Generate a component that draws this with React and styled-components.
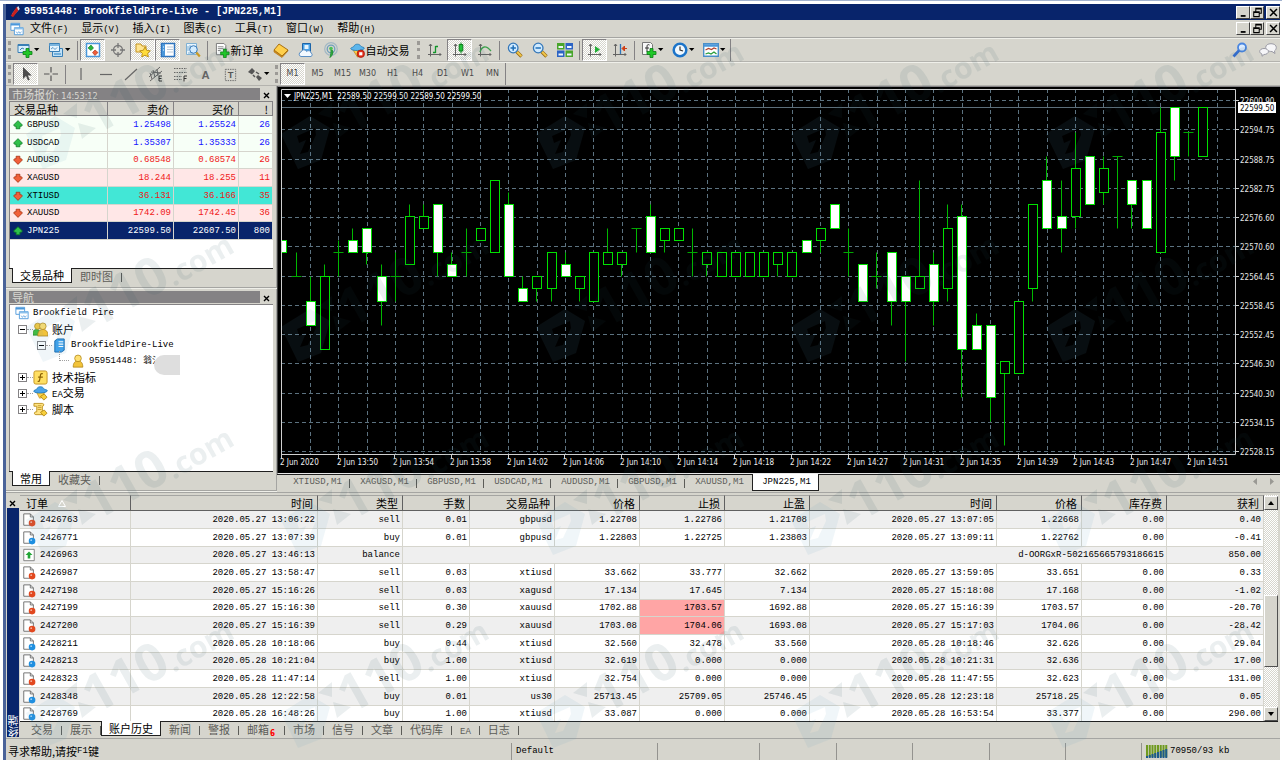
import React from 'react';

import styled, { createGlobalStyle, css } from 'styled-components';

const face = '#d6d5cd';
const shade = '#848284';
const navy = '#08246b';
const mono = '"Liberation Mono", "Noto Sans CJK SC", monospace';
const cjk = '"Noto Sans CJK SC", "Liberation Sans", sans-serif';
const tahoma = '"DejaVu Sans Condensed", "DejaVu Sans", sans-serif';

const GlobalStyle = createGlobalStyle`
  * { box-sizing: border-box; }
  body {
    background: #ffffff;
    color: #000000;
    font-family: ${cjk};
    font-size: 11px;
    line-height: 14px;
    margin: 0;
    overflow: hidden;
  }
  button {
    background: none;
    border: 0;
    color: inherit;
    font: inherit;
    margin: 0;
    padding: 0;
    white-space: nowrap;
  }
`;

const dither = css`
  background: repeating-conic-gradient(#ffffff 0% 25%, ${face} 0% 50%) 0 0 / 2px 2px;
`;

const Frame = styled.div`
  background: linear-gradient(#a3b3cf 0 1px, #ffffff 1px);
  height: 100vh;
  min-height: 640px;
  padding: 4px 2px 3px 3px;
`;

const Window = styled.main`
  background: ${face};
  border-left: 3px solid #4a6399;
  display: flex;
  flex-direction: column;
  height: 100%;
`;

const TitleBar = styled.header`
  align-items: center;
  background: ${navy};
  color: #ffffff;
  display: flex;
  flex: none;
  font: bold 10px/16px ${mono};
  gap: 2px;
  height: 16px;
  padding-left: 4px;
`;

const TitleText = styled.span`
  flex: 1;
  white-space: pre;
`;

const WinButtons = styled.div`
  display: flex;
  margin-left: auto;
`;

const WinButton = styled.button`
  background: ${face};
  border: 1px solid;
  border-color: #ffffff #404040 #404040 #ffffff;
  color: #000000;
  display: flex;
  height: 13px;
  justify-content: center;
  width: 14px;

  &:last-child {
    margin-left: 2px;
  }
`;

const MenuBar = styled.nav`
  align-items: center;
  border-bottom: 1px solid #a5a5a2;
  display: flex;
  flex: none;
  height: 18px;
  padding-left: 4px;
`;

const MenuItem = styled.button`
  padding: 0 7px 0 6px;
`;

const Small = styled.span`
  font-family: ${mono};
  font-size: 9px;
`;

const ToolRow = styled.div`
  border-bottom: 1px solid #b4b3ae;
  border-top: 1px solid #efefe9;
  display: flex;
  flex: none;
  height: 24px;
  padding-left: 1px;
`;

const ToolGroup = styled.div`
  align-items: center;
  border-right: 1px solid ${shade};
  display: flex;
`;

const Grip = styled.span`
  border-left: 3px dotted #9c9a96;
  height: 18px;
  margin: 0 2px 0 1px;
  width: 3px;
`;

const Sep = styled.span`
  border-right: 1px solid ${shade};
  height: 19px;
  margin-right: 2px;
  width: 3px;
`;

const ToolButton = styled.button`
  align-items: center;
  color: ${(p) => (p.$muted ? '#4a4a4a' : '#000000')};
  display: flex;
  flex: none;
  font-family: ${(p) => (p.$muted ? '"DejaVu Sans", sans-serif' : cjk)};
  font-size: ${(p) => (p.$muted ? '8px' : '11px')};
  gap: 1px;
  height: 22px;
  justify-content: center;
  width: ${(p) => p.$width || 25}px;
  ${(p) => p.$pressed && css`
    ${dither}
    border: 1px solid;
    border-color: ${shade} #ffffff #ffffff ${shade};
  `}
`;

const Spacer = styled.div`
  flex: 1;
`;

const Middle = styled.div`
  display: grid;
  flex: 1;
  grid-template-columns: 271px minmax(0, 1fr);
  min-height: 0;
`;

const Dock = styled.div`
  display: grid;
  grid-template-rows: 203px minmax(0, 1fr);
  min-height: 0;
`;

const Panel = styled.section`
  border-bottom: 1px solid #efefe9;
  box-shadow: inset -1px -1px 0 #a5a5a2;
  display: flex;
  flex-direction: column;
  min-height: 0;
  padding: 2px 4px 3px 3px;
`;

const PanelTitle = styled.h2`
  display: flex;
  flex: none;
  font-size: 11px;
  font-weight: normal;
  height: 12px;
  line-height: 12px;
  margin: 0 0 1px;

  > span {
    background: ${shade};
    color: #d9d8d2;
    flex: 1;
    padding-left: 3px;
  }

  > button {
    width: 13px;
  }
`;

const Clock = styled.span`
  font-family: ${tahoma};
  font-size: 9px;
`;

const PanelBody = styled.div`
  background: #ffffff;
  border-left: 1px solid ${shade};
  border-top: 1px solid ${shade};
  flex: 1;
  min-height: 0;
`;

const TabStrip = styled.div`
  border-top: 1px solid #202020;
  color: #5c5c58;
  display: flex;
  flex: none;
  height: ${(p) => p.$height || 17}px;
  padding-left: 3px;
`;

const Tab = styled.button`
  font-family: ${cjk};
  height: 14px;
  line-height: 14px;
  padding: 0 9px 0 8px;
  position: relative;

  &::after {
    border-right: 1px solid #5c5c58;
    content: '';
    height: 9px;
    position: absolute;
    right: 0;
    top: 4px;
  }

  ${(p) => p.$active && css`
    background: #ffffff;
    border: 1px solid #202020;
    border-top: 0;
    color: #000000;
    height: 15px;
    margin-top: -1px;
    padding: 0 7px;

    &::after { display: none; }
  `}
`;

const Quotes = styled.table`
  border-collapse: separate;
  border-spacing: 0;
  table-layout: fixed;
  width: 100%;

  th {
    background: ${face};
    border-bottom: 1px solid ${shade};
    border-right: 1px solid ${shade};
    font-weight: normal;
    height: 14px;
    line-height: 12px;
    padding: 0 4px;
    text-align: right;
  }

  th:first-child {
    text-align: left;
  }
`;

const rowTone = {
  plain: '#f7fff7',
  pink: '#ffe7e7',
  teal: '#42e7d6',
  selected: navy,
};

const QuoteRow = styled.tr`
  background: ${(p) => rowTone[p.$tone]};
  color: ${(p) => (p.$tone === 'selected' ? '#ffffff' : p.$up ? '#1414ff' : '#f01818')};
  height: 18px;

  &:nth-child(3n) { height: 17px; }

  td {
    border-bottom: 1px solid ${face};
    border-right: 1px solid ${face};
    font: 9px/14px ${mono};
    padding: 0 2px;
    text-align: right;
  }

  td:first-child {
    color: ${(p) => (p.$tone === 'selected' ? '#ffffff' : '#000000')};
    padding-left: 3px;
    text-align: left;
  }
`;

const IconLabel = styled.span`
  align-items: center;
  display: flex;
  gap: ${(p) => p.$gap || 4}px;
`;

const Tree = styled.ul`
  list-style: none;
  margin: 0;
  padding: 0;
`;

const TreeItem = styled.li`
  align-items: center;
  display: flex;
  font-family: ${(p) => (p.$latin ? mono : cjk)};
  font-size: ${(p) => (p.$latin ? 9 : 11)}px;
  gap: 4px;
  height: 16px;
  padding-left: ${(p) => p.$indent}px;
`;

const Expander = styled.button`
  border: 1px solid ${shade};
  display: flex;
  height: 9px;
  position: relative;
  width: 9px;

  &::before {
    background: #000000;
    content: '';
    height: 1px;
    left: 1px;
    position: absolute;
    top: 3px;
    width: 5px;
  }

  &::after {
    background: #000000;
    content: '';
    display: ${(p) => (p.$open ? 'none' : 'block')};
    height: 5px;
    left: 3px;
    position: absolute;
    top: 1px;
    width: 1px;
  }
`;

const Dots = styled.span`
  border-bottom: 1px dotted #a0a0a0;
  height: 1px;
  margin: 0 -4px;
  width: 6px;
`;

const Branch = styled.span`
  border-bottom: 1px dotted #a0a0a0;
  border-left: 1px dotted #a0a0a0;
  height: 10px;
  margin-right: -2px;
  margin-top: -10px;
  width: 10px;
`;

const Account = styled.span`
  position: relative;
`;

const Smudge = styled.span`
  background: #dedede;
  border-radius: 12px 0 0 12px;
  height: 20px;
  left: 65px;
  position: absolute;
  top: 1px;
  width: 26px;
`;

const ChartSide = styled.div`
  display: flex;
  flex-direction: column;
  min-height: 0;
  min-width: 0;
`;

const ChartBox = styled.div`
  background: #000000;
  border-bottom: 1px solid #e8e8e8;
  border-left: 1px solid #404040;
  border-top: 1px solid ${shade};
  flex: 1;
  min-height: 0;
`;

const ChartSvg = styled.svg`
  display: block;
  font: 8px ${tahoma};
  height: 100%;
  width: 100%;
`;

const ChartTabs = styled(TabStrip)`
  align-items: flex-start;
  padding-left: 6px;

  svg { margin: 3px 3px 0 0; }
`;

const ChartTab = styled(Tab)`
  font: 9px/15px ${mono};
  height: ${(p) => (p.$active ? 17 : 15)}px;
  padding: 0 0 0 2px;
  width: 67px;

  &:nth-last-of-type(2)::after { display: none; }
`;

const Terminal = styled.section`
  border-top: 1px solid #a5a5a2;
  display: flex;
  flex: none;
  height: 246px;
  padding: 2px 2px 1px 1px;
`;

const TerminalSide = styled.div`
  display: flex;
  flex-direction: column;
  width: 13px;

  > button {
    height: 13px;
    width: 11px;
  }
`;

const TerminalName = styled.div`
  background: ${navy};
  color: #ffffff;
  flex: 1;
  line-height: 12px;
  margin-right: 1px;
  transform: rotate(180deg);
  width: 12px;
  writing-mode: vertical-rl;
`;

const TerminalMain = styled.div`
  display: flex;
  flex: 1;
  flex-direction: column;
  min-width: 0;
`;

const HistoryArea = styled.div`
  display: flex;
  flex: 1;
  min-height: 0;
  overflow: hidden;
`;

const HistoryWrap = styled.div`
  flex: 1;
  overflow: hidden;
`;

const History = styled.table`
  border-collapse: separate;
  border-spacing: 0;
  table-layout: fixed;
  width: 100%;

  th {
    background: ${face};
    border-bottom: 1px solid #606060;
    border-right: 1px solid #606060;
    border-top: 1px solid #a5a5a2;
    font-weight: normal;
    height: 16px;
    line-height: 13px;
    padding: 0 4px;
    text-align: right;
  }

  th:first-child {
    padding-left: 6px;
    text-align: left;
  }
`;

const Deal = styled.tr`
  background: #ffffff;
  height: 18px;

  &:nth-child(odd) { background: #efefef; }
  &:nth-child(3n) { height: 17px; }

  td {
    border-bottom: 1px solid ${face};
    border-right: 1px solid ${face};
    font: 9px/14px ${mono};
    padding: 0 2px;
    text-align: right;
    white-space: nowrap;
  }
`;

const Cell = styled.td`
  background: ${(p) => (p.$hit ? '#ffa5a5' : 'transparent')};
`;

const Scroll = styled.div`
  ${dither}
  display: flex;
  flex: none;
  flex-direction: column;
  padding-top: 1px;
  width: 14px;
`;

const ScrollPart = styled.button`
  align-items: center;
  background: ${face};
  border: 1px solid;
  border-color: #ffffff #505050 #505050 #ffffff;
  display: flex;
  height: ${(p) => p.$height || 14}px;
  justify-content: center;
`;

const Gap = styled.span`
  flex: ${(p) => p.$grow};
`;

const Badge = styled.sub`
  bottom: -2px;
  color: #ff0000;
  font: bold 8px/8px ${tahoma};
  position: absolute;
  right: 10px;
`;

const MailTab = styled(Tab)`
  padding-right: 16px;
`;

const StatusBar = styled.footer`
  align-items: center;
  border-top: 1px solid #a5a5a2;
  display: grid;
  flex: none;
  grid-template-columns: minmax(0, 1fr) 146px 102px 77px 76px 77px 76px 76px 139px;
  height: 22px;
  padding-top: 3px;

  > span {
    align-items: center;
    border-left: 1px solid #94938f;
    display: flex;
    gap: 2px;
    height: 17px;
    padding-left: 4px;
  }

  > span:first-child {
    border: 0;
    gap: 0;
    padding-left: 2px;
  }
`;

const Watermark = styled.svg`
  height: 100%;
  left: 0;
  pointer-events: none;
  position: fixed;
  top: 0;
  width: 100%;
`;

const Svg = ({ size = 16, children, ...rest }) => (
  <svg width={size} height={size} viewBox="0 0 16 16" fill="none" aria-hidden="true" {...rest}>{children}</svg>
);

const Caret = () => (
  <svg width="6" height="4" viewBox="0 0 6 4" aria-hidden="true"><path d="M0 0h5.4L2.7 3z" fill="#000" /></svg>
);

const CloseGlyph = () => (
  <svg width="7" height="7" viewBox="0 0 7 7" aria-hidden="true"><path d="M1 1l5 5M6 1L1 6" stroke="#000" strokeWidth="1.4" /></svg>
);

const Plus = () => (
  <path d="M9 6.5h3v3h3v3h-3v3H9v-3H6v-3h3z" fill="#20c828" stroke="#0a7d14" strokeWidth=".8" />
);

const Axes = () => (
  <path d="M3.5 2v12.500M1 12.500h13M2 4l1.500-2L5 4M12.500 11l1.500 1.500-1.500 1.500" stroke="#636363" strokeWidth="1" />
);

const Mag = ({ children }) => (
  <>
    <path d="M9.500 9.500l5 5" stroke="#9a6b12" strokeWidth="3.400" />
    <path d="M10 9.800l4.300 4.300" stroke="#f0c64a" strokeWidth="2" />
    <circle cx="6.200" cy="6" r="4.800" fill="#cfeaff" stroke="#3577b8" strokeWidth="1.300" />
    {children}
  </>
);

const Diamond = ({ children }) => (
  <>
    {children}
    <path d="M8 11l4-2.500 3 3.500-3.500 3z" fill="#f7cf3c" stroke="#a97c08" strokeWidth=".8" />
  </>
);

const icons = {
  newChart: (
    <>
      <path d="M1 2.500h11v8H1z" fill="#d9eefb" stroke="#3a7fb5" />
      <path d="M1 3h11" stroke="#3a7fb5" strokeWidth="2" />
      <path d="M3 8l2-2 2 1" stroke="#3a7fb5" />
      <Plus />
    </>
  ),
  profiles: (
    <>
      <path d="M4.500 6.500h10v8h-10z" fill="#bfe0f6" stroke="#3a7fb5" />
      <path d="M1.500 1.500h10v8h-10z" fill="#e6f4fd" stroke="#3a7fb5" />
      <path d="M1 3h11M6 12h7" stroke="#5aa0d3" strokeWidth="1.500" />
      <path d="M3 7l2-1.500 2 2 2-2" stroke="#3a7fb5" strokeWidth=".8" />
    </>
  ),
  watch: (
    <>
      <path d="M1.500 1.500h13v13h-13z" fill="#fff" stroke="#4a97da" strokeWidth="1.500" />
      <path d="M3 6L6 3l2.500 3L6 8.500z" fill="#29b53a" stroke="#08731a" strokeWidth=".6" />
      <path d="M7.500 10.500L10 8l3 2.500-3 3z" fill="#ee5b38" stroke="#a32b11" strokeWidth=".6" />
    </>
  ),
  cross: (
    <>
      <circle cx="8" cy="8" r="4.500" stroke="#777" strokeWidth="1.300" />
      <path d="M8 1v5M8 10v5M1 8h5M10 8h5" stroke="#777" strokeWidth="1.300" />
    </>
  ),
  navigator: (
    <>
      <path d="M1 2h5l1 2h4v6H1z" fill="#ffe591" stroke="#c39322" />
      <path d="M10 5l1.700 3.300 3.600.5-2.600 2.500.6 3.600L10 13.200l-3.300 1.700.6-3.600L4.700 8.800l3.600-.5z" fill="#ffdc3b" stroke="#b78a13" strokeWidth=".9" />
    </>
  ),
  terminal: (
    <>
      <path d="M1.500 1.500h13v13h-13z" fill="#fff" stroke="#2f74be" strokeWidth="1.500" />
      <path d="M3.500 2v12" stroke="#4a97da" strokeWidth="3" />
      <path d="M7 5h6M7 7.500h6M7 10h6" stroke="#b9c8d8" />
      <path d="M3 5h1M3 8h1" stroke="#fff" />
    </>
  ),
  tester: (
    <>
      <path d="M1.500 1.500h10v11h-10z" fill="#e9f5fd" stroke="#7fb0d3" />
      <path d="M3 4v5M5 3v4M3 11h6" stroke="#7fb0d3" />
      <circle cx="8.500" cy="7.500" r="3.800" fill="#cfeaff" fillOpacity=".85" stroke="#3577b8" />
      <path d="M11.300 10.500l3.500 4" stroke="#c99a24" strokeWidth="2.200" />
    </>
  ),
  order: (
    <>
      <path d="M1.500.5h8l2 2v10h-10z" fill="#fff" stroke="#777" />
      <path d="M3 4h6M3 6h6M3 8h3" stroke="#888" />
      <Plus />
    </>
  ),
  book: (
    <>
      <path d="M1 8v2l8 5.500 6-6.500V8l-6 6z" fill="#d98f1c" stroke="#a87011" strokeWidth=".6" />
      <path d="M1 8l5-6 9 6-6 6z" fill="#ffcf4a" stroke="#a87011" />
    </>
  ),
  mql: (
    <>
      <path d="M4.500 1.500h8v9h-8z" fill="#4ba3e8" stroke="#1c64a8" />
      <path d="M6.500 3h4v4h-4z" fill="#e6f4fd" />
      <path d="M3 14.500a2.300 2.300 0 010-4.500 3 3 0 015.600-.5A2.500 2.500 0 0113 11a1.900 1.900 0 010 3.500z" fill="#f3f9ff" stroke="#5b8fc4" />
    </>
  ),
  signal: (
    <>
      <circle cx="8" cy="7" r="6.300" stroke="#a3b8c4" strokeWidth="1.200" />
      <circle cx="8" cy="7" r="3.800" stroke="#6f9fbd" strokeWidth="1.300" />
      <path d="M8 7c3 2 2 6-1 8.500 1-3 1-5 1-8.500z" fill="#35b546" stroke="#1d8b2e" />
      <circle cx="8" cy="6.500" r="1.800" fill="#4bbf57" />
    </>
  ),
  auto: (
    <>
      <path d="M3 7l5 8 5-3V6z" fill="#ffd248" stroke="#b78316" strokeWidth=".8" />
      <path d="M.7 6C1 4.500 4 4.800 4.500 3c.6-2.300 6-2.300 6.700 0 .4 1.500 3.800 1 4.100 2.500C15 8.500 1.500 9 .7 6z" fill="#5cb6ec" stroke="#1e74ae" strokeWidth=".8" />
      <circle cx="11.500" cy="11.500" r="4" fill="#e12b18" stroke="#9e1408" strokeWidth=".7" />
      <path d="M9.800 9.800h3.400v3.400H9.800z" fill="#fff" />
    </>
  ),
  bars: (<><Axes /><path d="M8.500 4v7M8.500 4.500h2.500M6 10.500h2.500" stroke="#12962a" strokeWidth="1.300" /></>),
  candles: (<><Axes /><path d="M9 .5v11" stroke="#12962a" /><path d="M7.200 2.500h3.600v6.500H7.200z" fill="#1fc237" stroke="#0b7d1c" /></>),
  line: (<><Axes /><path d="M3 10c2-6 6-7 11-1" stroke="#3da24d" strokeWidth="1.300" /></>),
  zoomIn: (<Mag><path d="M3.500 6h5.400M6.200 3.300v5.400" stroke="#1f6fb8" strokeWidth="1.500" /></Mag>),
  zoomOut: (<Mag><path d="M3.500 6h5.400" stroke="#1f6fb8" strokeWidth="1.500" /></Mag>),
  tile: (
    <>
      <path d="M0 1h7.500v6.500H0zM8.500 8.500H16V15H8.500z" fill="#49a52b" />
      <path d="M8.500 1H16v6.500H8.500zM0 8.500h7.500V15H0z" fill="#2b63c4" />
      <path d="M1.500 4H6v2H1.500zM10 4h4.500v2H10zM1.500 11.500H6v2H1.500zM10 11.500h4.500v2H10z" fill="#eef6fd" />
    </>
  ),
  scroll: (<><Axes /><path d="M8 4l5 3.500L8 11z" fill="#22ad36" /></>),
  shift: (<><Axes /><path d="M8.500 2v10" stroke="#2d74b8" strokeWidth="1.300" /><path d="M15 6.500h-4M12.500 4L10 6.500 12.500 9z" stroke="#cf3e15" fill="#cf3e15" /></>),
  indicators: (
    <>
      <path d="M1.500.5h8l2 2v10h-10z" fill="#f8f8f8" stroke="#777" />
      <path d="M8.500 3c-2-1-2.500 0-2.500 2v5M4 6h4" stroke="#333" />
      <Plus />
    </>
  ),
  clock: (
    <>
      <circle cx="8" cy="8" r="6.300" fill="#f2f9ff" stroke="#1c74c9" strokeWidth="2.500" />
      <path d="M8 4.500V8l3 1" stroke="#333" strokeWidth="1.200" />
    </>
  ),
  template: (
    <>
      <path d="M.7 1.700h14.600v12.600H.7z" fill="#fff" stroke="#4a8fc9" strokeWidth="1.400" />
      <path d="M1 3.500h14" stroke="#4a97da" strokeWidth="2.500" />
      <path d="M2.500 8l3-1.500 3 1 2.500-1.500 2.500 1" stroke="#b0412b" strokeWidth="1.300" />
      <path d="M2.500 12l3-1 2.500 1 3-2 2.500 2" stroke="#2a9e3b" strokeWidth="1.300" />
    </>
  ),
  pointer: <path d="M5 1v12l3-3 2 4.500 1.800-.8L9.800 9.500h4z" fill="#4d4d4d" />,
  plusCross: <path d="M8 1v5.500M8 9.500V15M1 8h5.500M9.500 8H15" stroke="#555" strokeWidth="1.200" />,
  vline: <path d="M8 2v12" stroke="#666" strokeWidth="1.200" />,
  hline: <path d="M2 8.500h12" stroke="#666" strokeWidth="1.200" />,
  trend: <path d="M2 14L14 3" stroke="#666" strokeWidth="1.200" />,
  channel: (
    <>
      <path d="M1 11L12 1M2 15L14 5M2 7l2 6M5 4l2 7M9 3l1 7M3 6l10 1" stroke="#666" />
      <path d="M14 10h-3v5h3M11 12.500h2.500" stroke="#333" />
    </>
  ),
  fibo: (
    <>
      <path d="M1 2.500h13M1 6.500h13M1 10.500h8M1 13.500h8" stroke="#666" strokeDasharray="1.500 1" />
      <path d="M14 10h-3v5.500M11 12.500h2.500" stroke="#333" />
    </>
  ),
  label: <path d="M2.500 2.500h11v12h-11z" stroke="#666" strokeDasharray="1.500 1" />,
  arrows: (
    <>
      <path d="M1 6l4-4 3 3-3 3.500zM9 11l2-2 4 3-3 3z" fill="#555" />
      <path d="M6 9l2 2M9 6l3 2" stroke="#555" strokeWidth="1.500" />
    </>
  ),
  find: (<><circle cx="10" cy="5.500" r="4" fill="#dcecff" stroke="#4a86e0" strokeWidth="1.800" /><path d="M7 8.500l-5.500 6" stroke="#3670d4" strokeWidth="2.600" /></>),
  app: (
    <>
      <path d="M1 1.500h10v8H1z" fill="#fff" stroke="#4a97da" />
      <path d="M1 3h10" stroke="#4a97da" strokeWidth="2" />
      <path d="M5 6.500h10v8H5z" fill="#fff" stroke="#4a97da" />
      <path d="M5 7.500h10" stroke="#8cc0ea" strokeWidth="2" />
      <path d="M7 11l1.500 2 1.500-2 1.500 2 1.500-2" stroke="#4a97da" strokeWidth=".8" />
    </>
  ),
  users: (
    <>
      <path d="M0 14c0-5 1-6 4-6s4 2 4 6z" fill="#3fbf3a" stroke="#1b8218" strokeWidth=".7" />
      <circle cx="5" cy="4.500" r="3.300" fill="#f6cb3f" stroke="#a77c0e" strokeWidth=".7" />
      <path d="M5 15c0-5 2-7 5.500-7S16 10 16 15z" fill="#f2c33a" stroke="#a77c0e" strokeWidth=".7" />
      <circle cx="10.500" cy="4.500" r="3.500" fill="#ffe071" stroke="#a77c0e" strokeWidth=".7" />
    </>
  ),
  user: (
    <>
      <path d="M2.500 15c0-5 2-7 5.500-7s5.500 2 5.500 7z" fill="#f2c33a" stroke="#a77c0e" strokeWidth=".8" />
      <circle cx="8" cy="5" r="3.800" fill="#ffe071" stroke="#a77c0e" strokeWidth=".8" />
    </>
  ),
  server: (
    <>
      <path d="M3 3l3-2h7v12l-3 2H3z" fill="#3fa3ee" stroke="#1466ad" />
      <path d="M7 4h5M7 6.500h5M7 9h5" stroke="#fff" strokeWidth="1.200" />
    </>
  ),
  func: (
    <>
      <rect x="1" y="1" width="14" height="14" rx="2" fill="#ffdf62" stroke="#c39322" />
      <path d="M10.500 4C7.500 3 8 6 7.500 8.500S7 13 5 12M5.500 7.500h5" stroke="#8c6205" strokeWidth="1.300" />
    </>
  ),
  expert: (
    <Diamond>
      <path d="M4 7l3 6 4-1 1-5z" fill="#ffd248" stroke="#b78316" strokeWidth=".7" />
      <path d="M.7 5.500C1 4 4 4.300 4.500 2.500c.6-2.300 6-2.300 6.700 0 .4 1.500 3.800 1 4.100 2.500C15 8 1.500 8.500.7 5.500z" fill="#4ba3e8" stroke="#1e74ae" strokeWidth=".8" />
    </Diamond>
  ),
  script: (
    <Diamond>
      <path d="M1 1.500h9c2 0 2 3 0 3v7c0 2 1 2 1 2H3c-2 0-2-3 0-3h1v-6H1z" fill="#ffe382" stroke="#b78a13" strokeWidth=".9" />
      <path d="M5 4h4M5 6h4M5 8h4" stroke="#b78a13" strokeWidth=".8" />
    </Diamond>
  ),
};

const Icon = ({ name, size }) => <Svg size={size}>{icons[name]}</Svg>;

const Arrow = ({ up }) => (
  <Svg size={10}>
    <g transform={up ? undefined : 'rotate(180 8 8)'}>
      <path d="M8 1l7 7-1.500 2H11v4H5v-4H2.500L1 8z" fill={up ? '#2fc14a' : '#f2603a'} stroke={up ? '#0d7a25' : '#a63413'} strokeWidth="1.300" />
    </g>
  </Svg>
);

const DocIcon = ({ type }) => (
  <Svg size={14}>
    {type === 'balance' ? (
      <>
        <path d="M2 1.500h12v13H2z" fill="#fff" stroke="#777" />
        <path d="M8 4l4 4h-2.500v4h-3V8H4z" fill="#22a637" />
      </>
    ) : (
      <>
        <path d="M2 1h7.500L13 4.500V14H2z" fill="#fff" stroke="#666" />
        <path d="M9.500 1v3.500H13" stroke="#666" />
        <circle cx="11.500" cy="11.500" r="3.800" fill={type === 'sell' ? '#e2481f' : '#1f8fe0'} />
        <circle cx="10.500" cy="10.500" r="1" fill="#ffffff" fillOpacity=".6" />
      </>
    )}
  </Svg>
);

const Controls = () => (
  <WinButtons>
    <WinButton aria-label="minimize"><Svg size={11}><path d="M4 13h7" stroke="#000" strokeWidth="2.600" /></Svg></WinButton>
    <WinButton aria-label="restore">
      <Svg size={11}><path d="M5.500 6V2h8v7h-3M5 3h9M2.500 7h8v7h-8zM2 8h9" stroke="#000" strokeWidth="1.500" /></Svg>
    </WinButton>
    <WinButton aria-label="close"><Svg size={11}><path d="M3 3l10 10M13 3L3 13" stroke="#000" strokeWidth="2.200" /></Svg></WinButton>
  </WinButtons>
);

const Tool = ({ icon, pressed, width, drop, muted, label, children }) => (
  <ToolButton $pressed={pressed} $width={drop ? 31 : width} $muted={muted} aria-label={label || icon}>
    {icon && <Icon name={icon} size={children ? 15 : 16} />}
    {children}
    {drop && <Caret />}
  </ToolButton>
);

const menus = [['文件', '(F)'], ['显示', '(V)'], ['插入', '(I)'], ['图表', '(C)'], ['工具', '(T)'], ['窗口', '(W)'], ['帮助', '(H)']];
const frames = ['M1', 'M5', 'M15', 'M30', 'H1', 'H4', 'D1', 'W1', 'MN'];

const quotes = [
  ['GBPUSD', '1.25498', '1.25524', '26', true, 'plain'],
  ['USDCAD', '1.35307', '1.35333', '26', true, 'plain'],
  ['AUDUSD', '0.68548', '0.68574', '26', false, 'plain'],
  ['XAGUSD', '18.244', '18.255', '11', false, 'pink'],
  ['XTIUSD', '36.131', '36.166', '35', false, 'teal'],
  ['XAUUSD', '1742.09', '1742.45', '36', false, 'pink'],
  ['JPN225', '22599.50', '22607.50', '800', true, 'selected'],
];

const chartTabs = ['XTIUSD,M1', 'XAGUSD,M1', 'GBPUSD,M1', 'USDCAD,M1', 'AUDUSD,M1', 'GBPUSD,M1', 'XAUUSD,M1', 'JPN225,M1'];

const columns = [['订单', 111], ['时间', 187], ['类型', 85], ['手数', 67], ['交易品种', 85], ['价格', 85], ['止损', 85], ['止盈', 85], ['时间', 187], ['价格', 85], ['库存费', 85], ['获利']];

const deals = [
  ['2426763', '2020.05.27 13:06:22', 'sell', '0.01', 'gbpusd', '1.22708', '1.22786', '1.21708', '2020.05.27 13:07:05', '1.22668', '0.00', '0.40'],
  ['2426771', '2020.05.27 13:07:39', 'buy', '0.01', 'gbpusd', '1.22803', '1.22725', '1.23803', '2020.05.27 13:09:11', '1.22762', '0.00', '-0.41'],
  ['2426963', '2020.05.27 13:46:13', 'balance', 'd-OORGxR-502165665793186615', '850.00'],
  ['2426987', '2020.05.27 13:58:47', 'sell', '0.03', 'xtiusd', '33.662', '33.777', '32.662', '2020.05.27 13:59:05', '33.651', '0.00', '0.33'],
  ['2427198', '2020.05.27 15:16:26', 'sell', '0.03', 'xagusd', '17.134', '17.645', '7.134', '2020.05.27 15:18:08', '17.168', '0.00', '-1.02'],
  ['2427199', '2020.05.27 15:16:30', 'sell', '0.30', 'xauusd', '1702.88', '1703.57', '1692.88', '2020.05.27 15:16:39', '1703.57', '0.00', '-20.70'],
  ['2427200', '2020.05.27 15:16:39', 'sell', '0.29', 'xauusd', '1703.08', '1704.06', '1693.08', '2020.05.27 15:17:03', '1704.06', '0.00', '-28.42'],
  ['2428211', '2020.05.28 10:18:06', 'buy', '0.44', 'xtiusd', '32.560', '32.478', '33.560', '2020.05.28 10:18:46', '32.626', '0.00', '29.04'],
  ['2428213', '2020.05.28 10:21:04', 'buy', '1.00', 'xtiusd', '32.619', '0.000', '0.000', '2020.05.28 10:21:31', '32.636', '0.00', '17.00'],
  ['2428323', '2020.05.28 11:47:14', 'sell', '1.00', 'xtiusd', '32.754', '0.000', '0.000', '2020.05.28 11:47:55', '32.623', '0.00', '131.00'],
  ['2428348', '2020.05.28 12:22:58', 'buy', '0.01', 'us30', '25713.45', '25709.05', '25746.45', '2020.05.28 12:23:18', '25718.25', '0.00', '0.05'],
  ['2428769', '2020.05.28 16:48:26', 'buy', '1.00', 'xtiusd', '33.087', '0.000', '0.000', '2020.05.28 16:53:54', '33.377', '0.00', '290.00'],
];

const prices = ['22600.90', '22594.75', '22588.75', '22582.75', '22576.60', '22570.60', '22564.45', '22558.45', '22552.45', '22546.30', '22540.30', '22534.15', '22528.15'];
const times = ['2020', '13:50', '13:54', '13:58', '14:02', '14:06', '14:10', '14:14', '14:18', '14:22', '14:27', '14:31', '14:35', '14:39', '14:43', '14:47', '14:51'];

// high, body top, body bottom, low (in steps below the bid line), bearish
const bars = [
  [10, 11, 12, 12, 1], [12, 14, 14, 14], [14, 16, 18, 18, 1], [13, 14, 20, 20], [11, 12, 12, 14], [10, 11, 12, 12, 1],
  [10, 10, 12, 13, 1], [13, 14, 16, 18, 1], [12, 14, 14, 16], [8, 9, 13, 13], [8, 9, 10, 10], [8, 8, 12, 14, 1],
  [12, 13, 14, 14, 1], [10, 12, 12, 14], [10, 10, 11, 11], [6, 6, 12, 12], [7, 8, 14, 14, 1], [14, 15, 16, 16, 1],
  [14, 14, 15, 16], [12, 12, 15, 16], [12, 13, 14, 14, 1], [14, 14, 15, 16], [12, 12, 16, 16], [10, 12, 13, 13],
  [12, 12, 13, 14], [10, 10, 10, 12], [8, 9, 12, 12, 1], [10, 10, 11, 12], [10, 10, 11, 11], [10, 12, 12, 14],
  [12, 12, 13, 14], [12, 12, 14, 14], [12, 12, 14, 14], [12, 12, 14, 14], [12, 12, 14, 14], [12, 12, 13, 14],
  [12, 12, 14, 14], [11, 11, 12, 12, 1], [10, 10, 11, 12], [8, 8, 10, 10, 1], [10, 12, 12, 14], [13, 13, 16, 16, 1],
  [12, 14, 14, 15], [12, 12, 16, 18, 1], [14, 14, 16, 21, 1], [6, 14, 15, 15], [12, 13, 16, 18, 1], [8, 10, 15, 16],
  [8, 9, 20, 24, 1], [17, 18, 20, 20, 1], [18, 18, 24, 26, 1], [21, 21, 22, 28], [16, 16, 22, 22], [8, 8, 15, 16],
  [4, 6, 10, 10, 1], [6, 9, 10, 12, 1], [2, 5, 9, 10], [4, 4, 8, 8, 1], [4, 5, 7, 8], [4, 4, 4, 10],
  [6, 6, 8, 10, 1], [6, 6, 10, 10, 1], [0, 2, 12, 12], [0, 0, 4, 6, 1], [2, 2, 2, 4], [0, 0, 4, 4],
];

const level = (n) => Math.round(18.4 + n * 12.07) + 0.5;

const Chart = () => (
  <ChartSvg>
    <defs>
      <clipPath id="plot"><rect x="0" y="0" width="955" height="366" /></clipPath>
    </defs>
    <g transform="translate(3 2)">
      <g clipPath="url(#plot)" fill="none">
        {Array.from({ length: 33 }, (_, i) => {
          const x = Math.round(28.9 + (i * 85) / 3) + 0.5;
          return <path key={x} d={`M${x} 0V365`} stroke="#5c7280" strokeDasharray="4 3" />;
        })}
        {prices.map((p, i) => (
          <path key={p} d={`M0 ${Math.round(11 + i * 29.26) + 0.5}H955`} stroke="#5c7280" strokeDasharray="4 3" />
        ))}
        <path d="M0 18.500H955" stroke="#5c6e7a" />
        {bars.map(([high, top, bottom, low, bear], i) => {
          const x = Math.round(0.4 + (i * 85) / 6) + 0.5;
          return (
            <g key={x} stroke="#00e000">
              <path d={`M${x} ${level(high)}V${level(top)}M${x} ${level(bottom)}V${level(low)}`} stroke="#00b800" />
              {top === bottom
                ? <path d={`M${x - 5} ${level(top)}H${x + 5}`} stroke="#00a800" />
                : <rect x={x - 4} y={level(top)} width="9" height={level(bottom) - level(top)} fill={bear ? '#ffffff' : '#000000'} />}
            </g>
          );
        })}
      </g>
      <path d="M.5 365V.5H954.500V365.500H0" fill="none" stroke="#d0d0d0" />
      <path d="M3 5h7l-3.500 4z" fill="#fff" />
      <text x="13" y="10" fill="#fff" xmlSpace="preserve">JPN225,M1  22589.50 22599.50 22589.50 22599.50</text>
      {prices.map((p, i) => {
        const y = Math.round(11 + i * 29.26);
        return (
          <g key={p}>
            <path d={`M955 ${y + 0.5}h3`} stroke="#d0d0d0" />
            <text x="959" y={y + 4} fill="#e8e8e8">{p}</text>
          </g>
        );
      })}
      <rect x="957" y="13" width="38" height="11" fill="#fff" />
      <text x="959" y="22" fill="#000">22599.50</text>
      {times.map((t, i) => {
        const x = Math.round((i * 170) / 3);
        return (
          <g key={t}>
            <path d={`M${x + 0.5} 366v3`} stroke="#d0d0d0" />
            <text x={x - 1} y="376" fill="#f0f0f0">2 Jun {t}</text>
          </g>
        );
      })}
    </g>
  </ChartSvg>
);

const PanelHead = ({ children }) => (
  <PanelTitle><span>{children}</span><button aria-label="close"><CloseGlyph /></button></PanelTitle>
);

const MarketWatch = () => (
  <Panel>
    <PanelHead>市场报价<Clock>: 14:53:12</Clock></PanelHead>
    <PanelBody>
      <Quotes>
        <colgroup><col width="98" /><col width="66" /><col width="65" /><col /></colgroup>
        <thead><tr><th>交易品种</th><th>卖价</th><th>买价</th><th>!</th></tr></thead>
        <tbody>
          {quotes.map(([name, bid, ask, spread, up, tone]) => (
            <QuoteRow key={name} $up={up} $tone={tone}>
              <td><IconLabel><Arrow up={up} />{name}</IconLabel></td>
              <td>{bid}</td>
              <td>{ask}</td>
              <td>{spread}</td>
            </QuoteRow>
          ))}
        </tbody>
      </Quotes>
    </PanelBody>
    <TabStrip><Tab $active>交易品种</Tab><Tab>即时图</Tab></TabStrip>
  </Panel>
);

const Navigator = () => (
  <Panel>
    <PanelHead>导航</PanelHead>
    <PanelBody>
      <Tree>
        <TreeItem $latin $indent={5}><Icon name="app" size={14} />Brookfield Pire</TreeItem>
        <TreeItem $indent={8}><Expander $open aria-label="账户" /><Dots /><Icon name="users" size={15} />账户</TreeItem>
        <TreeItem $latin $indent={27}><Expander $open aria-label="BrookfieldPire-Live" /><Dots /><Icon name="server" size={15} />BrookfieldPire-Live</TreeItem>
        <TreeItem $latin $indent={49}>
          <Branch />
          <Icon name="user" size={14} />
          <Account>95951448: 翁氵<Smudge /></Account>
        </TreeItem>
        <TreeItem $indent={8}><Expander aria-label="技术指标" /><Dots /><Icon name="func" size={15} />技术指标</TreeItem>
        <TreeItem $indent={8}><Expander aria-label="EA" /><Dots /><Icon name="expert" size={15} /><span><Small>EA</Small>交易</span></TreeItem>
        <TreeItem $indent={8}><Expander aria-label="脚本" /><Dots /><Icon name="script" size={15} />脚本</TreeItem>
      </Tree>
    </PanelBody>
    <TabStrip><Tab $active>常用</Tab><Tab>收藏夹</Tab></TabStrip>
  </Panel>
);

const AccountHistory = () => (
  <HistoryArea>
    <HistoryWrap>
      <History>
        <colgroup>{columns.map(([name, width], i) => <col key={i} width={width} />)}</colgroup>
        <thead>
          <tr>
            {columns.map(([name], i) => (
              <th key={i}>
                {i === 0
                  ? <IconLabel $gap={10}>{name}<svg width="8" height="7" viewBox="0 0 8 7"><path d="M4 .5L.5 6.500h7z" fill="none" stroke="#ffffff" /></svg></IconLabel>
                  : name}
              </th>
            ))}
          </tr>
        </thead>
        <tbody>
          {deals.map(([id, ...cells]) => (
            <Deal key={id}>
              <td><IconLabel><DocIcon type={cells[1]} />{id}</IconLabel></td>
              {cells.map((c, i) => (
                <Cell key={i} colSpan={cells.length === 4 && i === 2 ? 8 : 1} $hit={i === 5 && (c === '1703.57' || c === '1704.06')}>{c}</Cell>
              ))}
            </Deal>
          ))}
        </tbody>
      </History>
    </HistoryWrap>
    <Scroll>
      <ScrollPart aria-label="up"><svg width="6" height="4"><path d="M3 0l3 4H0z" /></svg></ScrollPart>
      <Gap $grow={86} />
      <ScrollPart $height={72} aria-label="thumb" />
      <Gap $grow={40} />
      <ScrollPart aria-label="down"><svg width="6" height="4"><path d="M3 4l3-4H0z" /></svg></ScrollPart>
    </Scroll>
  </HistoryArea>
);

const Marks = () => (
  <Watermark aria-hidden="true">
    <defs>
      <pattern id="mark" width="255" height="193" patternUnits="userSpaceOnUse" x="10" y="0">
        <g fill="#264e58" fillOpacity=".09">
          {[0, 193].map((y) => (
            <g key={y} transform={`translate(36 ${y - 53})`}>
              <path d="M9-24L-20-6-3 29 20 20 29-12zM-4-4L14-12 15-5 7 12-1 14 5 0-2 3z" fill="#5a9ab8" fillRule="evenodd" />
              <path d="M17-26l14-11v15zM32-17l18 5-14 11z" />
              <g transform="translate(49 -4) rotate(-29.500)" fontFamily="Open Sans" fontWeight="bold">
                <text fontSize="52">110</text>
                <text x="89" y="2" fontSize="30">.com</text>
              </g>
            </g>
          ))}
        </g>
      </pattern>
    </defs>
    <rect x="6" y="22" width="100%" height="736" fill="url(#mark)" />
  </Watermark>
);

export default function App() {
  return (
    <Frame>
      <GlobalStyle />
      <Window>
        <TitleBar>
          <Svg size={12}><path d="M11 0L3 10l2 2 8-8z" fill="#d9e6f5" /><path d="M9 1L1 13l3 2 7-9z" fill="#c8201e" /></Svg>
          <TitleText>95951448: BrookfieldPire-Live - [JPN225,M1]</TitleText>
          <Controls />
        </TitleBar>
        <MenuBar>
          <Icon name="app" size={14} />
          {menus.map(([name, key]) => <MenuItem key={name}>{name}<Small>{key}</Small></MenuItem>)}
          <Controls />
        </MenuBar>
        <ToolRow>
          <ToolGroup>
            <Grip />
            <Tool icon="newChart" drop />
            <Tool icon="profiles" drop />
            <Sep />
            <Tool icon="watch" pressed />
            <Tool icon="cross" />
            <Tool icon="navigator" pressed />
            <Tool icon="terminal" pressed />
            <Tool icon="tester" />
            <Sep />
            <Tool icon="order" width={58} label="新订单">新订单</Tool>
            <Tool icon="book" />
            <Tool icon="mql" />
            <Tool icon="signal" />
            <Tool icon="auto" width={73} label="自动交易">自动交易</Tool>
            <Grip />
            <Tool icon="bars" />
            <Tool icon="candles" pressed />
            <Tool icon="line" />
            <Sep />
            <Tool icon="zoomIn" />
            <Tool icon="zoomOut" />
            <Tool icon="tile" />
            <Sep />
            <Tool icon="scroll" pressed />
            <Tool icon="shift" />
            <Sep />
            <Tool icon="indicators" drop />
            <Tool icon="clock" drop />
            <Tool icon="template" drop />
          </ToolGroup>
          <Spacer />
          <Tool icon="find" width={30} />
          <ToolButton aria-label="chat">
            <svg width="18" height="14" viewBox="0 0 18 14" fill="#f6f6f8" stroke="#9a9aa4">
              <path d="M12 .7c3 0 5.300 1.500 5.300 3.700S16 7.500 15.500 8l.5 2.500-3-2C9 8.500 6.700 7 6.700 4.500S9 .7 12 .7z" />
              <path d="M5 5.500c2.500 0 4.400 1.300 4.400 3s-2 3-4.400 3L3 13.300V11C1.500 10.500.7 9.500.7 8.500c0-1.700 1.800-3 4.300-3z" />
            </svg>
          </ToolButton>
        </ToolRow>
        <ToolRow>
          <ToolGroup>
            <Grip />
            <Tool icon="pointer" pressed />
            <Tool icon="plusCross" />
            <Sep />
            <Tool icon="vline" />
            <Tool icon="hline" />
            <Tool icon="trend" />
            <Tool icon="channel" />
            <Tool icon="fibo" />
            <ToolButton><Svg size={15}><text x="8" y="13" textAnchor="middle" fontFamily="Liberation Sans" fontWeight="bold" fontSize="12" fill="#666">A</text></Svg></ToolButton>
            <ToolButton><Svg size={15}>{icons.label}<text x="8" y="12" textAnchor="middle" fontFamily="Liberation Sans" fontWeight="bold" fontSize="10" fill="#555">T</text></Svg></ToolButton>
            <Tool icon="arrows" drop />
            <Grip />
            {frames.map((f) => <Tool key={f} muted pressed={f === 'M1'} label={f}>{f}</Tool>)}
          </ToolGroup>
        </ToolRow>
        <Middle>
          <Dock>
            <MarketWatch />
            <Navigator />
          </Dock>
          <ChartSide>
            <ChartBox><Chart /></ChartBox>
            <ChartTabs $height={18}>
              {chartTabs.map((name, i) => <ChartTab key={i} $active={i === 7}>{name}</ChartTab>)}
              <Spacer />
              <svg width="24" height="8" viewBox="0 0 24 8" fill="#9a9994"><path d="M4 0v7L0 3.500zM17 0v7l4-3.500z" /></svg>
            </ChartTabs>
          </ChartSide>
        </Middle>
        <Terminal>
          <TerminalSide>
            <button aria-label="close"><CloseGlyph /></button>
            <TerminalName>终端</TerminalName>
          </TerminalSide>
          <TerminalMain>
            <AccountHistory />
            <TabStrip $height={16}>
              <Tab>交易</Tab>
              <Tab>展示</Tab>
              <Tab $active>账户历史</Tab>
              <Tab>新闻</Tab>
              <Tab>警报</Tab>
              <MailTab>邮箱<Badge>6</Badge></MailTab>
              <Tab>市场</Tab>
              <Tab>信号</Tab>
              <Tab>文章</Tab>
              <Tab>代码库</Tab>
              <Tab><Small>EA</Small></Tab>
              <Tab>日志</Tab>
            </TabStrip>
          </TerminalMain>
        </Terminal>
        <StatusBar>
          <span>寻求帮助,请按<Small>F1</Small>键</span>
          <span><Small>Default</Small></span>
          <span /><span /><span /><span /><span /><span />
          <span>
            <svg width="22" height="13" viewBox="0 0 22 13">
              {[0, 1, 2, 3, 4, 5, 6, 7].map((i) => (
                <g key={i}>
                  <rect x={i * 2.75} y="0" width="2" height="12" fill="#6f9a1f" />
                  <rect x={i * 2.75} y={11 - i} width="2" height={i + 2} fill="#1c5a8c" />
                </g>
              ))}
            </svg>
            <Small>70950/93 kb</Small>
          </span>
        </StatusBar>
      </Window>
      <Marks />
    </Frame>
  );
}
